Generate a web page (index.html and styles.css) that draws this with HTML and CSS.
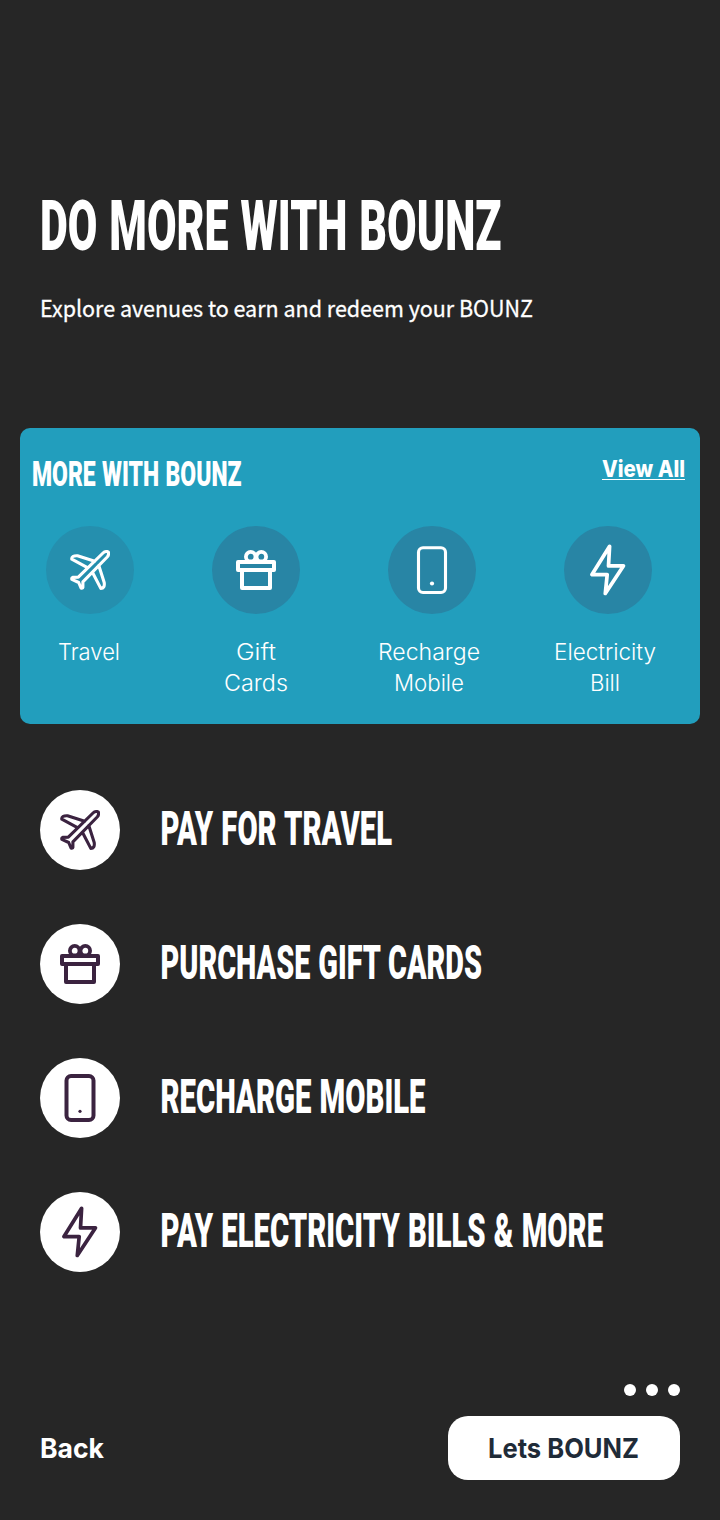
FILE: index.html
```html
<!DOCTYPE html>
<html lang="en">
<head>
<meta charset="utf-8">
<title>Do more with BOUNZ</title>
<link rel="stylesheet" href="styles.css">
</head>
<body>
<svg class="defs" width="0" height="0">
  <symbol id="plane" viewBox="0 0 40 40"><path d="M8.3 27.2 33 3C35.2 .9 38.3 1.4 38.4 2.2 38.8 4 38.6 5.5 37.2 7L12.9 31.8V37.3Q12.5 38.6 11 38L8.7 32.5 1.9 29.4Q1.4 28 2.7 27.4ZM24.7 11.3 7.5 5.8Q1.2 5.5 1.8 9.2L17 17.3M28.8 15.5 34.2 32.5Q35 38.3 30.8 38.4L22.8 23"/></symbol>
  <symbol id="gift" viewBox="0 0 40 40"><path d="M2 12H38V20H2ZM6 20V38H34V20"/><circle cx="14.7" cy="6.7" r="4.8" stroke-width="3.8"/><circle cx="25.3" cy="6.7" r="4.8" stroke-width="3.8"/></symbol>
  <symbol id="bolt" viewBox="0 0 36 52"><path d="M19.6 2.3 2 30.6H17.2L15.3 49.5 33.4 21.9H18.5Z"/></symbol>
</svg>
<main class="screen">
  <header class="intro">
    <h1><svg class="display title" width="500" height="60"><text x="0" y="54" textLength="461.5" lengthAdjust="spacingAndGlyphs">DO MORE WITH BOUNZ</text></svg></h1>
    <p><svg class="source" width="500" height="30"><text x="0" y="21" textLength="493" lengthAdjust="spacingAndGlyphs">Explore avenues to earn and redeem your BOUNZ</text></svg></p>
  </header>
  <section class="card">
    <div class="card-head">
      <h2><svg class="display subtitle" width="220" height="32"><text x="0" y="28" textLength="209.5" lengthAdjust="spacingAndGlyphs">MORE WITH BOUNZ</text></svg></h2>
      <a class="view"><svg class="rounded" width="83" height="21"><text x="0" y="19" textLength="83" lengthAdjust="spacingAndGlyphs">View All</text></svg></a>
    </div>
    <div class="services">
      <div class="service travel"><span class="disc"><svg class="icon" width="40" height="40"><use href="#plane"/></svg></span>
        <svg class="label" width="132" height="64"><text x="34" y="22" textLength="62" lengthAdjust="spacingAndGlyphs">Travel</text></svg></div>
      <div class="service"><span class="disc"><svg class="icon heavy" width="40" height="40"><use href="#gift"/></svg></span>
        <svg class="label" width="132" height="64"><text x="46" y="22" textLength="40" lengthAdjust="spacingAndGlyphs">Gift</text><text x="34" y="53" textLength="64" lengthAdjust="spacingAndGlyphs">Cards</text></svg></div>
      <div class="service"><span class="disc"><svg class="icon" width="30" height="48" viewBox="0 0 30 48"><rect x="1.5" y="1.8" width="27" height="44.7" rx="4.5"/><circle class="dot" cx="15" cy="37.5" r="2.1"/></svg></span>
        <svg class="label" width="132" height="64"><text x="12" y="22" textLength="102" lengthAdjust="spacingAndGlyphs">Recharge</text><text x="28" y="53" textLength="70" lengthAdjust="spacingAndGlyphs">Mobile</text></svg></div>
      <div class="service"><span class="disc"><svg class="icon bolt" width="36" height="52"><use href="#bolt"/></svg></span>
        <svg class="label" width="132" height="64"><text x="12" y="22" textLength="102" lengthAdjust="spacingAndGlyphs">Electricity</text><text x="48" y="53" textLength="30" lengthAdjust="spacingAndGlyphs">Bill</text></svg></div>
    </div>
  </section>
  <ul class="actions">
    <li><span class="badge"><svg class="icon" width="40" height="40"><use href="#plane"/></svg></span><svg class="display item" width="480" height="80"><text x=".5" y="55" textLength="231.5" lengthAdjust="spacingAndGlyphs">PAY FOR TRAVEL</text></svg></li>
    <li><span class="badge"><svg class="icon heavy" width="40" height="40"><use href="#gift"/></svg></span><svg class="display item" width="480" height="80"><text x=".5" y="55" textLength="321.5" lengthAdjust="spacingAndGlyphs">PURCHASE GIFT CARDS</text></svg></li>
    <li><span class="badge"><svg class="icon heavy" width="32" height="48" viewBox="0 0 32 48"><rect x="2.5" y="2" width="27" height="44" rx="4.5"/><circle class="dot" cx="16" cy="37.3" r="1.6"/></svg></span><svg class="display item" width="480" height="80"><text x=".5" y="55" textLength="265" lengthAdjust="spacingAndGlyphs">RECHARGE MOBILE</text></svg></li>
    <li><span class="badge"><svg class="icon bolt" width="36" height="52"><use href="#bolt"/></svg></span><svg class="display item" width="480" height="80"><text x=".5" y="55" textLength="442.5" lengthAdjust="spacingAndGlyphs">PAY ELECTRICITY BILLS &amp; MORE</text></svg></li>
  </ul>
  <div class="pager"><i></i><i></i><i></i></div>
  <footer class="footer">
    <a><svg class="action" width="66" height="64"><text x="0" y="42" textLength="64" lengthAdjust="spacingAndGlyphs">Back</text></svg></a>
    <button class="primary"><svg class="action" width="152" height="64"><text x="-1" y="42" textLength="151" lengthAdjust="spacingAndGlyphs">Lets BOUNZ</text></svg></button>
  </footer>
</main>
</body>
</html>
```
FILE: styles.css
```css
* { box-sizing: border-box; }
body { margin: 0; background: #262626; color: #fff; font-family: Inter, "Liberation Sans", sans-serif; }
svg { display: block; overflow: visible; fill: currentColor; flex: none; }
.defs { position: absolute; }
h1, h2, p, ul { margin: 0; padding: 0; }
.screen { height: 1520px; display: flex; flex-direction: column; }
.intro { height: 428px; padding: 196px 40px 0; }
.intro p { margin-top: 40px; }
.display { font-family: Roboto, sans-serif; font-weight: 900; word-spacing: 0.03em; }
.title { font-size: 70.3px; }
.source { font-family: "Noto Sans CJK SC", sans-serif; font-size: 22.5px; font-weight: 400; stroke: currentColor; stroke-width: .3; }
.card { height: 296px; margin: 0 20px; background: #229ebd; border-radius: 10px; }
.card-head { height: 98px; padding: 30px 15px 0 12px; display: flex; justify-content: space-between; align-items: flex-start; }
.subtitle { font-size: 35.2px; }
.view { border-bottom: 1px solid #fff; }
.rounded { font-size: 22.3px; font-weight: 800; }
.services { display: flex; gap: 44px; padding-left: 4px; }
.service { width: 132px; }
.travel { margin-right: -10px; }
.disc { display: flex; align-items: center; justify-content: center; width: 88px; height: 88px; margin: 0 auto 24px; border-radius: 50%; background: #2885a5; }
.travel .disc { background: #258fae; }
.label { font-size: 22.3px; font-weight: 300; }
.icon { fill: none; stroke: currentColor; stroke-width: 3.1; stroke-linejoin: round; stroke-linecap: round; }
.heavy { stroke-width: 4; }
.bolt { stroke-width: 3.7; }
.dot { fill: currentColor; stroke: none; }
.actions { list-style: none; padding: 66px 40px 0; display: flex; flex-direction: column; gap: 54px; height: 660px; }
.actions li { display: flex; gap: 40px; height: 80px; }
.badge { display: flex; flex: none; align-items: center; justify-content: center; width: 80px; height: 80px; border-radius: 50%; background: #fff; color: #3b2340; }
.item { font-size: 48px; }
.pager { display: flex; justify-content: flex-end; gap: 10px; padding-right: 40px; height: 32px; }
.pager i { width: 12px; height: 12px; border-radius: 50%; background: #fff; }
.footer { display: flex; justify-content: space-between; padding: 0 40px; }
.action { font-size: 27.5px; font-weight: 700; }
.primary { width: 232px; height: 64px; padding: 0 0 0 41px; border: 0; border-radius: 20px; background: #fff; color: #1f2b38; font-family: inherit; }
```
